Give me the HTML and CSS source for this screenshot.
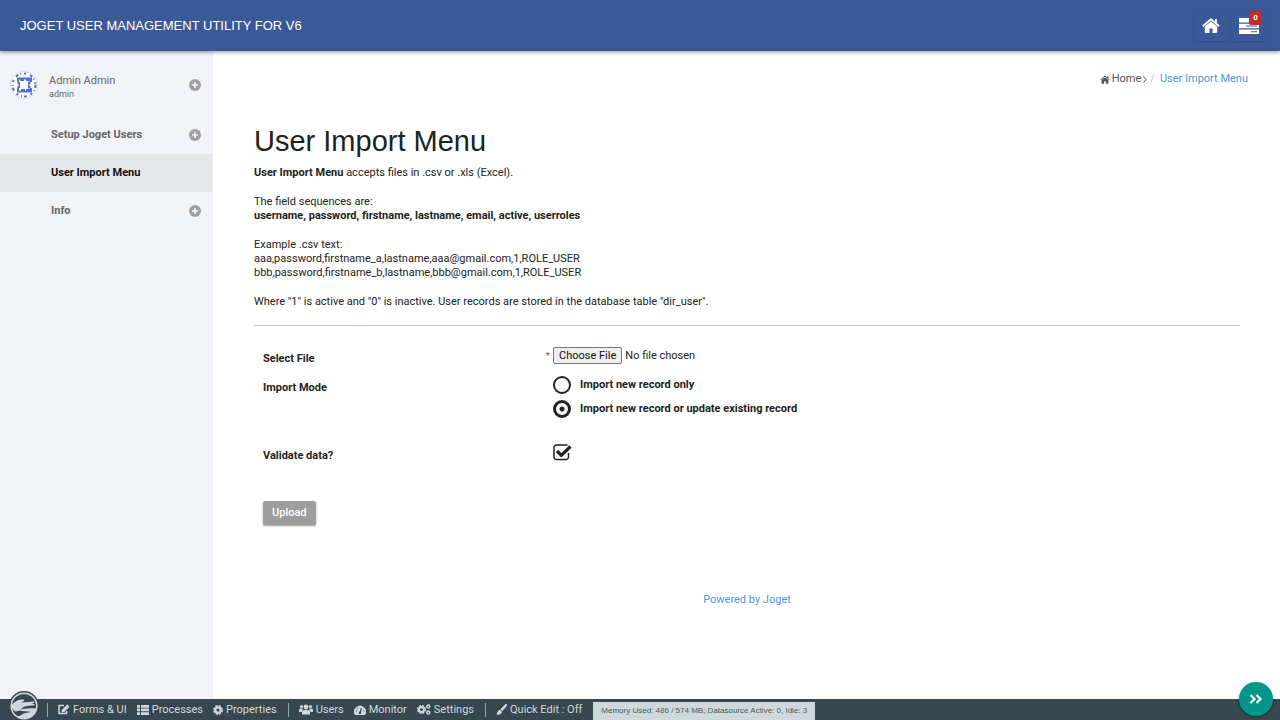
FILE: index.html
```html
<!DOCTYPE html>
<html lang="en">
<head>
    <meta charset="UTF-8">
    <meta name="viewport" content="width=device-width, initial-scale=1.0">
    <title>User Import Menu</title>
    <link rel="stylesheet" href="styles.css">
</head>
<body>
    <!-- Shared icons -->
    <svg class="sprite" aria-hidden="true">
        <symbol id="icon-plus" viewBox="0 0 12 12">
            <circle cx="6" cy="6" r="6" fill="currentColor"/>
            <path d="M6 3v6M3 6h6" stroke="#f1f3f8" stroke-width="1.7"/>
        </symbol>
        <symbol id="icon-home" viewBox="0 0 18 15">
            <path d="M9 3.4 2.8 8.6V14a1 1 0 0 0 1 1H7.5v-4.500h3V15h3.700a1 1 0 0 0 1-1V8.600z" fill="currentColor"/>
            <path d="M.8 8.200 9 1.300l8.200 6.900M14 1v4" fill="none" stroke="currentColor" stroke-width="1.800"/>
        </symbol>
    </svg>

    <header class="topbar">
        <a class="brand" href="#">JOGET USER MANAGEMENT UTILITY FOR V6</a>
        <nav class="top-actions">
            <a class="top-button" href="#" aria-label="Home">
                <svg width="18" height="15"><use href="#icon-home"/></svg>
            </a>
            <a class="top-button" href="#" aria-label="Inbox">
                <svg width="20" height="16" viewBox="0 0 20 16">
                    <path d="M0 0h20v4.500H0zM0 5.800h20v4.400H0zM0 11.500h20V16H0z" fill="#fff"/>
                    <path d="M7 8h11M12 13.700h6" stroke="#3b5998" stroke-width="1.100"/>
                </svg>
                <span class="badge">0</span>
            </a>
        </nav>
    </header>

    <div class="layout">
        <aside class="sidebar">
            <a class="user" href="#">
                <svg class="avatar" viewBox="0 0 28 28">
                    <circle cx="14" cy="14" r="13.500" fill="#fff" stroke="#d5daee"/>
                    <g fill="none" stroke="#5a6ccb">
                        <path d="M8 11V7.500h3v2h2v-2h4v2h2v-2h2V11M8 17v3.500h4v-2h2v2h3v-2h2v2h2V17M7.500 12h2v4h-2M20.500 12h-2v4h2" stroke-width="2"/>
                        <circle cx="14" cy="14" r="11.500" stroke-width="2" stroke-dasharray="3 2 1 3 2 4"/>
                    </g>
                    <path d="M10 10h8v8h-8z" fill="#fff"/>
                </svg>
                <span class="user-text">
                    <span class="user-name">Admin Admin</span>
                    <span class="user-id">admin</span>
                </span>
                <svg class="plus" width="12" height="12"><use href="#icon-plus"/></svg>
            </a>
            <nav class="menu">
                <a class="menu-item" href="#">Setup Joget Users <svg class="plus" width="12" height="12"><use href="#icon-plus"/></svg></a>
                <a class="menu-item active" href="#">User Import Menu</a>
                <a class="menu-item" href="#">Info <svg class="plus" width="12" height="12"><use href="#icon-plus"/></svg></a>
            </nav>
        </aside>

        <main class="content">
            <nav class="breadcrumb">
                <a class="crumb" href="#"><svg width="10" height="9"><use href="#icon-home"/></svg>Home</a>
                <svg width="4" height="7" viewBox="0 0 4 7"><path d="M.5.500 3.300 3.500.500 6.500" fill="none" stroke="#555" stroke-width="1"/></svg>
                <span class="slash">/</span>
                <a class="crumb current" href="#">User Import Menu</a>
            </nav>

            <section class="intro">
                <h1>User Import Menu</h1>
                <p><b>User Import Menu</b> accepts files in .csv or .xls (Excel).</p>
                <p>The field sequences are:<br>
                <b>username, password, firstname, lastname, email, active, userroles</b></p>
                <p>Example .csv text:<br>
                aaa,password,firstname_a,lastname,aaa@gmail.com,1,ROLE_USER<br>
                bbb,password,firstname_b,lastname,bbb@gmail.com,1,ROLE_USER</p>
                <p>Where "1" is active and "0" is inactive. User records are stored in the database table "dir_user".</p>
            </section>

            <form class="import-form">
                <div class="row row-file">
                    <label class="label" for="file">Select File</label>
                    <div class="field"><span class="required">*</span><input id="file" type="file"></div>
                </div>
                <div class="row row-mode" role="radiogroup" aria-labelledby="mode">
                    <span class="label" id="mode">Import Mode</span>
                    <div class="field options">
                        <label class="option"><input type="radio" name="mode">Import new record only</label>
                        <label class="option"><input type="radio" name="mode" checked>Import new record or update existing record</label>
                    </div>
                </div>
                <div class="row row-validate">
                    <label class="label" for="validate">Validate data?</label>
                    <div class="field check">
                        <input id="validate" type="checkbox" checked>
                        <svg width="19" height="18" viewBox="0 0 19 18">
                            <path d="M15.500 9v4a2.500 2.500 0 0 1-2.500 2.500H3.500A2.500 2.500 0 0 1 1 13V3.500A2.500 2.500 0 0 1 3.500 1H13q1 0 1.500.400" fill="none" stroke="#222" stroke-width="1.500"/>
                            <path d="M4 7l4.300 4.300L17.500 2.500" fill="none" stroke="#222" stroke-width="3.200"/>
                        </svg>
                    </div>
                </div>
                <button class="upload" type="button">Upload</button>
            </form>

            <footer class="powered"><a href="#">Powered by Joget</a></footer>
        </main>
    </div>

    <div class="adminbar">
        <a class="logo" href="#" aria-label="Joget">
            <svg width="30" height="30" viewBox="0 0 30 30">
                <circle cx="15" cy="15" r="15" fill="#37474f"/>
                <circle cx="15" cy="15" r="12.800" fill="#37474f" stroke="#cfd8dc" stroke-width="1.600"/>
                <path d="M2.500 14C6 10 10 8 14.500 8.500c1.500.500 1 1.500-2.500 3l8-.500c2-.500 4-.800 5 0s0 1.200-3 1.700l3.500.300c1 .800-.500 1.500-3 1.500-5 .500-7 .500-9 2.500S9 20.500 6 20.500q-3-2-3.500-6.500z" fill="#cfd8dc"/>
                <path d="M10 19.500c3-2 9-2.500 17.500-2-1 6-6 10.500-12.500 10.500-3 0-6-1-8-3 2 .500 4 0 6-1.500s5-2 9-2.500c-4-.800-8-.800-12-1.500z" fill="#cfd8dc"/>
            </svg>
        </a>
        <div class="bar-group">
            <a class="bar-link" href="#">
                <svg width="12" height="11" viewBox="0 0 12 11"><path d="M8.500 7v2.500H1v-8h5" fill="none" stroke="currentColor" stroke-width="1.500"/><path d="M3.500 8.500 4 5.800 9.300.500l2.200 2.200-5.300 5.300z" fill="currentColor"/></svg>Forms &amp; UI</a>
            <a class="bar-link" href="#">
                <svg width="12" height="10" viewBox="0 0 12 10"><path d="M0 0h3v2.700H0zM4 0h8v2.700H4zM0 3.600h3v2.700H0zM4 3.600h8v2.700H4zM0 7.200h3v2.700H0zM4 7.200h8v2.700H4z" fill="currentColor"/></svg>Processes</a>
            <a class="bar-link" href="#">
                <svg width="10" height="10" viewBox="0 0 10 10"><circle cx="5" cy="5" r="2.700" fill="none" stroke="currentColor" stroke-width="2.200"/><circle cx="5" cy="5" r="4.200" fill="none" stroke="currentColor" stroke-width="1.600" stroke-dasharray="2.200 1.100"/></svg>Properties</a>
        </div>
        <div class="bar-group">
            <a class="bar-link" href="#">
                <svg width="14" height="11" viewBox="0 0 14 11"><g fill="currentColor"><circle cx="7" cy="3" r="2.400"/><circle cx="2.500" cy="2.500" r="1.600"/><circle cx="11.500" cy="2.500" r="1.600"/><path d="M3 10.500V8q0-2 2-2h4q2 0 2 2v2.500zM0 8V6q0-1.500 1.500-1.500H4L2.500 8zM14 8V6q0-1.500-1.500-1.500H10L11.500 8z"/></g></svg>Users</a>
            <a class="bar-link" href="#">
                <svg width="12" height="10" viewBox="0 0 12 10"><path d="M1 10a6 6 0 1 1 10 0z" fill="currentColor"/><path d="M6 7.500 7.500 3M2 6h1M3 3l.7.700M9.500 6h1" stroke="#37474f" stroke-width="1.100"/><circle cx="6" cy="7.700" r="1.300" fill="#37474f"/></svg>Monitor</a>
            <a class="bar-link" href="#">
                <svg width="14" height="11" viewBox="0 0 14 11"><g fill="none" stroke="currentColor"><circle cx="4.500" cy="5.500" r="2.500" stroke-width="2"/><circle cx="4.500" cy="5.500" r="3.900" stroke-width="1.300" stroke-dasharray="2 1.060"/><circle cx="11.300" cy="2.500" r="1.500" stroke-width="1.400"/><circle cx="11.300" cy="8.500" r="1.500" stroke-width="1.400"/></g></svg>Settings</a>
        </div>
        <div class="bar-group">
            <a class="bar-link" href="#">
                <svg width="11" height="11" viewBox="0 0 11 11"><path d="M10.800.200c.500.600 0 1.500-.500 2.200L6.500 7 4.500 5.200 9 .600c.600-.500 1.300-.900 1.800-.4zM4 5.800l2 1.800C6 10 3.500 11.500 0 10.200c2-.500 1-4 4-4.400z" fill="currentColor"/></svg>Quick Edit : Off</a>
        </div>
        <div class="memory">Memory Used: 486 / 574 MB; Datasource Active: 0, Idle: 3</div>
    </div>
    <button class="toggle" type="button" aria-label="Toggle admin bar">
        <svg width="14" height="10" viewBox="0 0 14 10"><path d="M1.500 1l4 4-4 4M7.500 1l4 4-4 4" fill="none" stroke="#fff" stroke-width="2.300"/></svg>
    </button>
</body>
</html>
```
FILE: styles.css
```css
* {
    margin: 0;
    padding: 0;
    box-sizing: border-box;
}

body {
    font-family: Roboto, "Liberation Sans", Arial, sans-serif;
    font-size: 11px;
    line-height: 14px;
    color: #222;
    background: #fff;
    min-height: 100vh;
    display: flex;
    flex-direction: column;
}

a {
    color: inherit;
    text-decoration: none;
}

svg {
    flex: none;
    display: block;
}

.sprite {
    position: absolute;
    width: 0;
    height: 0;
}

.topbar {
    display: flex;
    align-items: center;
    justify-content: space-between;
    height: 51px;
    padding: 0 14px 0 20px;
    background: #3b5998;
    color: #fff;
    box-shadow: 0 1px 4px rgba(0,0,0,0.45);
    z-index: 1;
}

.brand {
    font-family: "Liberation Sans", Arial, sans-serif;
    font-size: 13px;
}

.top-actions {
    display: flex;
    gap: 4px;
}

.top-button {
    position: relative;
    display: flex;
    align-items: center;
    justify-content: center;
    width: 34px;
    height: 30px;
    border-radius: 2px;
    box-shadow: 0 1px 2px rgba(0,0,0,0.15);
}

.badge {
    position: absolute;
    top: 0;
    right: 4px;
    width: 13px;
    height: 14px;
    border-radius: 2px;
    background: #c62828;
    font-size: 8px;
    font-weight: bold;
    text-align: center;
}

.layout {
    flex: 1;
    display: flex;
}

.sidebar {
    width: 213px;
    background: #f1f3f8;
    color: #666;
}

.user {
    display: flex;
    align-items: center;
    gap: 11px;
    height: 65px;
    padding: 3px 12px 0 10px;
}

.avatar {
    width: 28px;
    height: 28px;
}

.user-text {
    flex: 1;
    display: flex;
    flex-direction: column;
    padding-top: 4px;
}

.user-name {
    font-size: 11px;
}

.user-id {
    font-size: 9px;
    line-height: 13px;
}

.plus {
    color: #a0a0a0;
}

.menu-item {
    display: flex;
    align-items: center;
    justify-content: space-between;
    height: 38px;
    padding: 0 12px 0 51px;
    font-weight: bold;
}

.menu-item.active {
    background: #e6e7eb;
    color: #111;
}

.content {
    flex: 1;
    padding: 21px 40px 40px 41px;
}

.breadcrumb {
    display: flex;
    align-items: center;
    justify-content: flex-end;
    gap: 2px;
    margin-right: -8px;
    color: #555;
}

.crumb {
    display: flex;
    align-items: center;
    gap: 2px;
}

.slash {
    margin: 0 3px 0 1px;
    color: #bbb;
}

.current,
.powered {
    color: #4a9ae0;
}

.intro {
    margin-top: 38px;
    padding-bottom: 16px;
    border-bottom: 1px solid #c4c4c4;
}

h1 {
    margin-bottom: 7px;
    font-family: "Liberation Sans", Arial, sans-serif;
    font-size: 29px;
    font-weight: normal;
    line-height: 35px;
}

.intro p + p {
    margin-top: 15px;
}

.import-form {
    padding: 21px 9px 0;
    font-weight: bold;
}

.row {
    display: flex;
    align-items: flex-start;
}

.label {
    width: 290px;
    padding-top: 5px;
}

.row-file {
    height: 29px;
}

.row-mode {
    height: 68px;
}

.field {
    flex: 1;
    font-weight: normal;
}

.row-file .field {
    display: flex;
    align-items: center;
}

.required {
    width: 7px;
    margin-left: -7px;
    color: #d32f2f;
    font-size: 9px;
}

input[type="file"] {
    font: inherit;
}

input[type="file"]::file-selector-button {
    height: 17px;
    margin-right: 3px;
    padding: 0 5px;
    border: 1px solid #767676;
    border-radius: 2px;
    background: #efefef;
    color: #111;
    font: inherit;
}

.options {
    display: flex;
    flex-direction: column;
    gap: 6px;
    font-weight: bold;
}

.option {
    display: flex;
    align-items: center;
    gap: 9px;
}

input[type="radio"] {
    appearance: none;
    width: 18px;
    height: 18px;
    border: 2px solid #222;
    border-radius: 50%;
}

input[type="radio"]:checked {
    border-width: 3px;
    background: radial-gradient(circle, #222 2px, #fff 3px);
}

.check {
    position: relative;
}

.check input {
    display: block;
    width: 19px;
    height: 18px;
    appearance: none;
}

.check svg {
    position: absolute;
    top: 0;
    left: 0;
    pointer-events: none;
}

.row-validate {
    height: 57px;
}

.upload {
    display: block;
    height: 24px;
    padding: 0 9px;
    border: none;
    border-radius: 2px;
    background: #9e9e9e;
    color: #fff;
    box-shadow: 0 1px 2px rgba(0,0,0,0.4);
    font: inherit;
    font-weight: 500;
}

.powered {
    margin-top: 68px;
    text-align: center;
}

.adminbar {
    position: fixed;
    bottom: 0;
    left: 0;
    right: 0;
    z-index: 2;
    display: flex;
    align-items: center;
    height: 21px;
    padding-left: 9px;
    background: #37474f;
    color: #cfd8dc;
}

.logo {
    align-self: flex-start;
    margin-top: -8px;
    margin-right: 8px;
}

.bar-group {
    display: flex;
    gap: 10px;
    padding: 0 11px 0 10px;
    border-left: 1px solid #90a4ae;
}

.bar-link {
    display: flex;
    align-items: center;
    gap: 3px;
}

.memory {
    align-self: flex-end;
    height: 18px;
    padding: 0 8px;
    background: #cfd8dc;
    color: #455a64;
    font-family: "Liberation Sans", Arial, sans-serif;
    font-size: 8px;
    line-height: 18px;
}

.toggle {
    position: fixed;
    right: 7px;
    bottom: 4px;
    z-index: 3;
    display: flex;
    align-items: center;
    justify-content: center;
    width: 34px;
    height: 34px;
    border: none;
    border-radius: 50%;
    background: #009688;
    box-shadow: 0 1px 3px rgba(0,0,0,0.35);
}
```
